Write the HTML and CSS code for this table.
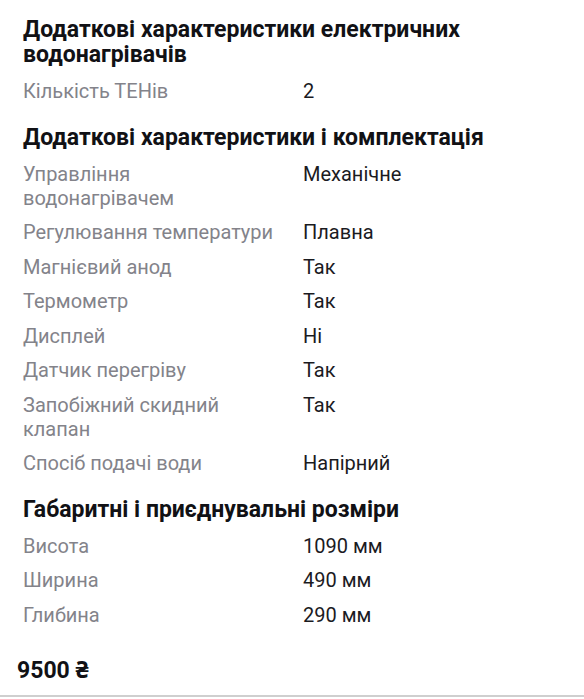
FILE: index.html
```html
<!DOCTYPE html>
<html lang="uk">
<head>
<meta charset="utf-8">
<link rel="stylesheet" href="styles.css">
</head>
<body>
<main class="specs">
  <section class="group">
    <h2 class="group-title">Додаткові характеристики електричних водонагрівачів</h2>
    <div class="row"><div class="label">Кількість ТЕНів</div><div class="value">2</div></div>
  </section>
  <section class="group">
    <h2 class="group-title">Додаткові характеристики і комплектація</h2>
    <div class="row"><div class="label">Управління водонагрівачем</div><div class="value">Механічне</div></div>
    <div class="row"><div class="label">Регулювання температури</div><div class="value">Плавна</div></div>
    <div class="row"><div class="label">Магнієвий анод</div><div class="value">Так</div></div>
    <div class="row"><div class="label">Термометр</div><div class="value">Так</div></div>
    <div class="row"><div class="label">Дисплей</div><div class="value">Ні</div></div>
    <div class="row"><div class="label">Датчик перегріву</div><div class="value">Так</div></div>
    <div class="row"><div class="label">Запобіжний скидний клапан</div><div class="value">Так</div></div>
    <div class="row"><div class="label">Спосіб подачі води</div><div class="value">Напірний</div></div>
  </section>
  <section class="group">
    <h2 class="group-title">Габаритні і приєднувальні розміри</h2>
    <div class="row"><div class="label">Висота</div><div class="value">1090 мм</div></div>
    <div class="row"><div class="label">Ширина</div><div class="value">490 мм</div></div>
    <div class="row"><div class="label">Глибина</div><div class="value">290 мм</div></div>
  </section>
</main>
<footer class="price-bar">
  <div class="price">9500 ₴</div>
</footer>
</body>
</html>
```
FILE: styles.css
```css
html, body {
  margin: 0;
  padding: 0;
  background: #ffffff;
}
body {
  font-family: Roboto, "Noto Sans", sans-serif;
  color: #1b1b1f;
  width: 584px;
  height: 699px;
  overflow: hidden;
}
.specs {
  padding: 17px 23px 0;
  display: flex;
  flex-direction: column;
  gap: 16px;
}
.group-title {
  margin: 0 0 7px;
  font-size: 23px;
  line-height: 25px;
  font-weight: 700;
  color: #111115;
}
.row {
  display: grid;
  grid-template-columns: 256px 1fr;
  column-gap: 24px;
  padding: 5.25px 0;
  font-size: 20px;
  line-height: 24px;
}
.label {
  color: #83838a;
}
.value {
  color: #1b1b1f;
}
.price-bar {
  margin-top: 26px;
  padding: 0 17px 12px;
  border-bottom: 2px solid #cfcfcf;
}
.price {
  font-size: 23px;
  line-height: 25px;
  font-weight: 700;
  color: #111115;
}
```
